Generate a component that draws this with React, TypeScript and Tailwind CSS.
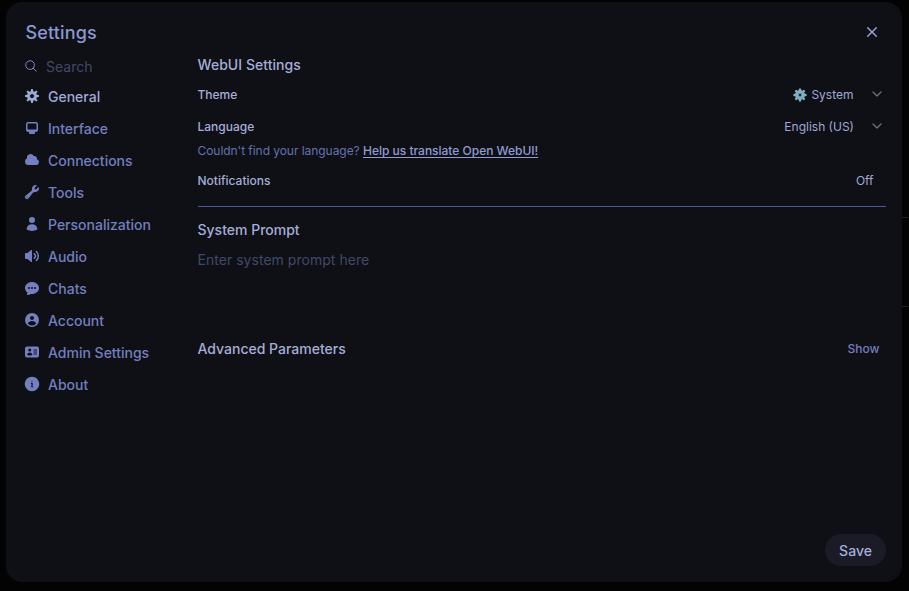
import React from "react";

const navItems: { label: string; box?: string; active?: boolean; paths: string[] }[] = [
  {
    label: "General",
    active: true,
    paths: [
      "M6.955 1.45A.5.5 0 0 1 7.452 1h1.096a.5.5 0 0 1 .497.45l.17 1.699c.484.12.94.312 1.356.562l1.321-1.081a.5.5 0 0 1 .67.033l.774.775a.5.5 0 0 1 .034.67l-1.08 1.32c.25.417.44.873.561 1.357l1.699.17a.5.5 0 0 1 .45.497v1.096a.5.5 0 0 1-.45.497l-1.699.17c-.12.484-.312.94-.562 1.356l1.082 1.322a.5.5 0 0 1-.034.67l-.774.774a.5.5 0 0 1-.67.033l-1.322-1.08c-.416.25-.872.44-1.356.561l-.17 1.699a.5.5 0 0 1-.497.45H7.452a.5.5 0 0 1-.497-.45l-.17-1.699a4.973 4.973 0 0 1-1.356-.562L4.108 13.37a.5.5 0 0 1-.67-.033l-.774-.775a.5.5 0 0 1-.034-.67l1.08-1.32a4.971 4.971 0 0 1-.561-1.357l-1.699-.17A.5.5 0 0 1 1 8.548V7.452a.5.5 0 0 1 .45-.497l1.699-.17c.12-.484.312-.94.562-1.356L2.629 4.107a.5.5 0 0 1 .034-.67l.774-.774a.5.5 0 0 1 .67-.033L5.43 3.71a4.97 4.97 0 0 1 1.356-.561l.17-1.699ZM6 8c0 .538.212 1.026.558 1.385l.057.057a2 2 0 0 0 2.828-2.828l-.058-.056A2 2 0 0 0 6 8Z",
    ],
  },
  {
    label: "Interface",
    paths: [
      "M2 4.25A2.25 2.25 0 0 1 4.25 2h7.5A2.25 2.25 0 0 1 14 4.25v5.5A2.25 2.25 0 0 1 11.75 12h-1.312c.1.128.21.248.328.36a.75.75 0 0 1 .234.545v.345a.75.75 0 0 1-.75.75h-4.5a.75.75 0 0 1-.75-.75v-.345a.75.75 0 0 1 .234-.545c.118-.111.228-.232.328-.36H4.25A2.25 2.25 0 0 1 2 9.75v-5.5Zm2.25-.75a.75.75 0 0 0-.75.75v4.5c0 .414.336.75.75.75h7.5a.75.75 0 0 0 .75-.75v-4.5a.75.75 0 0 0-.75-.75h-7.5Z",
    ],
  },
  {
    label: "Connections",
    paths: [
      "M1 9.5A3.5 3.5 0 0 0 4.5 13H12a3 3 0 0 0 .917-5.857 2.503 2.503 0 0 0-3.198-3.019 3.5 3.5 0 0 0-6.628 2.171A3.5 3.5 0 0 0 1 9.5Z",
    ],
  },
  {
    label: "Tools",
    paths: [
      "M11.5 8a3.5 3.5 0 0 0 3.362-4.476c-.094-.325-.497-.39-.736-.15L12.099 5.4a.48.48 0 0 1-.653.033 8.554 8.554 0 0 1-.879-.879.48.48 0 0 1 .033-.653l2.027-2.028c.24-.239.174-.642-.15-.736a3.502 3.502 0 0 0-4.476 3.427c.018.99-.133 2.093-.914 2.7l-5.31 4.13a2.015 2.015 0 1 0 2.828 2.827l4.13-5.309c.607-.78 1.71-.932 2.7-.914L11.5 8ZM3 13.5a.5.5 0 1 0 0-1 .5.5 0 0 0 0 1Z",
    ],
  },
  {
    label: "Personalization",
    paths: [
      "M8 7a3 3 0 1 0 0-6 3 3 0 0 0 0 6ZM13.4 12.5c.15.6-.1 1-.6 1.35A9.6 9.6 0 0 1 8 15a9.6 9.6 0 0 1-4.8-1.15c-.5-.35-.75-.75-.6-1.35a5.55 5.55 0 0 1 10.8 0Z",
    ],
  },
  {
    label: "Audio",
    paths: [
      "M7.557 2.066A.75.75 0 0 1 8 2.75v10.5a.75.75 0 0 1-1.248.56L3.59 11H2a1 1 0 0 1-1-1V6a1 1 0 0 1 1-1h1.59l3.162-2.81a.75.75 0 0 1 .805-.124ZM12.95 3.05a.75.75 0 1 0-1.06 1.06 5.5 5.5 0 0 1 0 7.78.75.75 0 1 0 1.06 1.06 7 7 0 0 0 0-9.9Z",
      "M10.828 5.172a.75.75 0 1 0-1.06 1.06 2.5 2.5 0 0 1 0 3.536.75.75 0 1 0 1.06 1.06 4 4 0 0 0 0-5.656Z",
    ],
  },
  {
    label: "Chats",
    paths: [
      "M8 2C4.262 2 1 4.57 1 8c0 1.86.98 3.486 2.455 4.566a3.472 3.472 0 0 1-.469 1.26.75.75 0 0 0 .713 1.14 6.961 6.961 0 0 0 3.06-1.06c.403.062.818.094 1.241.094 3.738 0 7-2.57 7-6s-3.262-6-7-6ZM5 9a1 1 0 1 0 0-2 1 1 0 0 0 0 2Zm7-1a1 1 0 1 1-2 0 1 1 0 0 1 2 0ZM8 9a1 1 0 1 0 0-2 1 1 0 0 0 0 2Z",
    ],
  },
  {
    label: "Account",
    paths: [
      "M15 8A7 7 0 1 1 1 8a7 7 0 0 1 14 0Zm-5-2a2 2 0 1 1-4 0 2 2 0 0 1 4 0ZM8 9c-1.825 0-3.422.977-4.295 2.437A5.49 5.49 0 0 0 8 13.5a5.49 5.49 0 0 0 4.294-2.063A4.997 4.997 0 0 0 8 9Z",
    ],
  },
  {
    label: "Admin Settings",
    box: "0 0 24 24",
    paths: [
      "M4.5 3.75a3 3 0 0 0-3 3v10.5a3 3 0 0 0 3 3h15a3 3 0 0 0 3-3V6.75a3 3 0 0 0-3-3h-15Zm4.125 3a2.25 2.25 0 1 0 0 4.5 2.25 2.25 0 0 0 0-4.5Zm-3.873 8.703a4.126 4.126 0 0 1 7.746 0 .75.75 0 0 1-.351.92 7.47 7.47 0 0 1-3.522.877 7.47 7.47 0 0 1-3.522-.877.75.75 0 0 1-.351-.92ZM15 8.25a.75.75 0 0 0 0 1.5h3.75a.75.75 0 0 0 0-1.5H15ZM14.25 12a.75.75 0 0 1 .75-.75h3.75a.75.75 0 0 1 0 1.5H15a.75.75 0 0 1-.75-.75Zm.75 2.25a.75.75 0 0 0 0 1.5h3.75a.75.75 0 0 0 0-1.5H15Z",
    ],
  },
  {
    label: "About",
    box: "1.2 1.2 21.6 21.6",
    paths: [
      "M2.25 12c0-5.385 4.365-9.75 9.75-9.75s9.75 4.365 9.75 9.75-4.365 9.75-9.75 9.75S2.25 17.385 2.25 12Zm8.706-1.442c1.146-.573 2.437.463 2.126 1.706l-.709 2.836.042-.02a.75.75 0 0 1 .67 1.34l-.04.022c-1.147.573-2.438-.463-2.127-1.706l.71-2.836-.042.02a.75.75 0 1 1-.671-1.34l.041-.022ZM12 9a.75.75 0 1 0 0-1.5.75.75 0 0 0 0 1.5Z",
    ],
  },
];

function Chevron() {
  return (
    <svg className="mb-[2px] h-[6px] w-[10px]" viewBox="0 0 10 6" fill="none" stroke="#6b7280" strokeWidth="1.25" strokeLinecap="round" strokeLinejoin="round">
      <path d="M1 1l4 4 4-4" />
    </svg>
  );
}

function GearEmoji() {
  return (
    <svg className="h-[14px] w-[14px]" viewBox="-7 -7 14 14">
      <g fill="#82aebf">
        {[0, 45, 90, 135].map((a) => (
          <rect key={a} x="-1.2" y="-6.6" width="2.4" height="13.2" rx="0.6" transform={`rotate(${a})`} />
        ))}
        <circle r="4.9" />
      </g>
      <circle r="2.2" fill="#5f94a6" />
      <circle r="1.1" fill="#0f1015" />
    </svg>
  );
}

export default function App() {
  return (
    <div className="flex h-[591px] w-[909px] bg-[#030304] pl-1.5 pt-0.5 font-['Inter',sans-serif] text-[#a5aed8]">
      <div className="flex h-[580px] w-[896px] flex-col rounded-2xl bg-[#0f1015]">
        <header className="flex h-[50px] shrink-0 items-start justify-between pl-[19.5px] pr-5 pt-[17px]">
          <h1 className="text-lg font-medium leading-7 tracking-[0.15px] text-[#8c97d2]">Settings</h1>
          <svg className="mt-[3px] h-5 w-5" viewBox="0 0 20 20" fill="#949fd8">
            <path d="M6.28 5.22a.75.75 0 00-1.06 1.06L8.94 10l-3.72 3.72a.75.75 0 101.06 1.06L10 11.06l3.72 3.72a.75.75 0 101.06-1.06L11.06 10l3.72-3.72a.75.75 0 00-1.06-1.06L10 8.94 6.28 5.22z" />
          </svg>
        </header>
        <div className="flex flex-1">
          <nav className="flex w-[191.5px] shrink-0 flex-col pl-[18px]">
            <div className="flex h-[29px] items-center">
              <svg className="mb-[1.5px] h-3.5 w-3.5" viewBox="0 0 24 24" fill="none" stroke="#8c97d2" strokeWidth="1.5" strokeLinecap="round" strokeLinejoin="round">
                <path d="m21 21-5.197-5.197m0 0A7.5 7.5 0 1 0 5.196 5.196a7.5 7.5 0 0 0 10.607 10.607Z" />
              </svg>
              <span className="ml-2 text-sm text-[#414868]">Search</span>
            </div>
            {navItems.map((item) => (
              <div key={item.label} className={`flex h-8 items-center gap-2 text-sm font-medium ${item.active ? "text-[#a0a8d8]" : "text-[#737fc0]"}`}>
                <svg className="mb-[2px] h-4 w-4" viewBox={item.box ?? "0 0 16 16"} fill="currentColor">
                  {item.paths.map((d) => (
                    <path key={d} d={d} fillRule="evenodd" clipRule="evenodd" />
                  ))}
                </svg>
                <span>{item.label}</span>
              </div>
            ))}
          </nav>
          <main className="flex w-[688.5px] flex-col">
            <h2 className="mt-[3px] text-sm font-medium leading-5 tracking-[0.05px]">WebUI Settings</h2>
            <div className="mt-1 flex h-8 items-center justify-between text-xs">
              <span className="font-medium">Theme</span>
              <div className="flex items-center pr-1 text-[#a0a8d8]">
                <GearEmoji />
                <span className="ml-1 mr-[18.5px]">System</span>
                <Chevron />
              </div>
            </div>
            <div className="flex h-8 items-center justify-between text-xs">
              <span className="font-medium">Language</span>
              <div className="flex items-center pr-1 text-[#a0a8d8]">
                <span className="mr-[18px]">English (US)</span>
                <Chevron />
              </div>
            </div>
            <p className="text-xs leading-4 text-[#6571b0]">
              <span className="tracking-[-0.05px]">Couldn't find your language? </span>
              <a className="font-medium tracking-[-0.01px] text-[#919bd2] underline underline-offset-2">Help us translate Open WebUI!</a>
            </p>
            <div className="mt-3.5 flex h-4 items-center justify-between text-xs">
              <span className="font-medium">Notifications</span>
              <span className="pr-[12.5px] text-[#a0a8d8]">Off</span>
            </div>
            <div className="mt-[17px] h-px bg-[#4a5aa5]" />
            <h2 className="mt-[13px] text-sm font-medium leading-5">System Prompt</h2>
            <p className="mt-2.5 h-[89px] text-sm leading-5 tracking-[0.03px] text-[#414868]">Enter system prompt here</p>
            <div className="flex h-5 shrink-0 items-center justify-between">
              <h2 className="text-sm font-medium leading-5">Advanced Parameters</h2>
              <span className="pr-[6.5px] text-xs font-medium text-[#737fc0]">Show</span>
            </div>
            <div className="mb-4 mt-auto flex justify-end">
              <button className="h-8 w-[61px] rounded-full bg-[#1a1b26] pt-px text-sm font-medium">Save</button>
            </div>
          </main>
        </div>
      </div>
      <div className="flex w-1.5 flex-col pt-[215px]">
        <div className="h-px bg-[#1b1f36]" />
        <div className="mt-[88px] h-px bg-[#1b1f36]" />
      </div>
    </div>
  );
}
